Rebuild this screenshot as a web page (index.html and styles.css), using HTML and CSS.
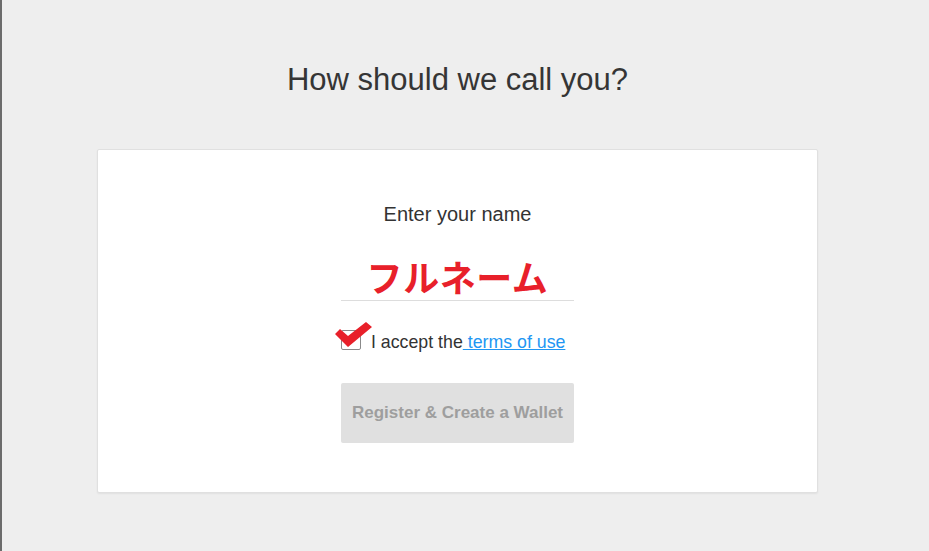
FILE: index.html
```html
<!DOCTYPE html>
<html lang="en">

<head>
    <meta charset="UTF-8">
    <meta name="viewport" content="width=device-width, initial-scale=1.0">
    <title>How should we call you?</title>
    <link rel="stylesheet" href="styles.css">
</head>

<body>
    <div class="page">
        <h1 class="title">How should we call you?</h1>

        <div class="card">
            <div class="label">Enter your name</div>

            <div class="field">
                <input class="name-input" type="text" value="フルネーム">
            </div>

            <div class="terms">
                <span class="check">
                    <span class="box"></span>
                    <!-- hand drawn check mark over the box -->
                    <svg class="tick" width="38" height="28" viewBox="0 0 38 28">
                        <polygon points="0,13 5,8 13,15 31,1 37,6 13,26" fill="#e8202a" />
                    </svg>
                </span>
                <span class="terms-text">I accept the<a href="#"> terms of use</a></span>
            </div>

            <button class="btn" disabled>Register &amp; Create a Wallet</button>
        </div>
    </div>
</body>

</html>
```

FILE: styles.css
```css
* {
    margin: 0;
    padding: 0;
    box-sizing: border-box;
}

html,
body {
    height: 100%;
}

body {
    background: #eeeeee;
    font-family: "Liberation Sans", Arial, sans-serif;
    color: #333333;
    border-left: 2px solid #6b6b6b;
}

.page {
    width: 911px;
    padding-top: 62px;
    display: flex;
    flex-direction: column;
    align-items: center;
}

.title {
    font-size: 31px;
    font-weight: normal;
    line-height: 36px;
    color: #353535;
}

.card {
    margin-top: 51px;
    width: 721px;
    height: 344px;
    background: #ffffff;
    border: 1px solid #e0e0e0;
    border-radius: 2px;
    box-shadow: 0 1px 2px rgba(0, 0, 0, 0.06);
    display: flex;
    flex-direction: column;
    align-items: center;
    padding-top: 52px;
}

.label {
    font-size: 20px;
    line-height: 24px;
    color: #333333;
}

.field {
    margin-top: 25px;
    width: 233px;
    border-bottom: 1px solid #dddddd;
}

.name-input {
    display: block;
    width: 100%;
    height: 49px;
    border: none;
    outline: none;
    background: transparent;
    text-align: center;
    font-family: "Noto Sans CJK JP", sans-serif;
    font-weight: bold;
    font-size: 36px;
    color: #e8202a;
    letter-spacing: 0.6px;
}

.terms {
    margin-top: 24px;
    width: 233px;
    display: flex;
    align-items: center;
    font-size: 17.75px;
    line-height: 22px;
    height: 30px;
}

.check {
    position: relative;
    flex: none;
    margin-left: -6px;
    width: 36px;
    height: 30px;
}

.box {
    position: absolute;
    left: 6px;
    top: 5px;
    width: 20px;
    height: 20px;
    border: 1px solid #8a8a8a;
    border-radius: 2px;
    background: #ffffff;
}

.tick {
    position: absolute;
    left: 0;
    top: -4px;
}

.terms-text {
    flex: none;
    color: #333333;
    margin-top: 4px;
}

.terms-text a {
    color: #2196f3;
    text-decoration: underline;
}

.btn {
    margin-top: 28px;
    width: 233px;
    height: 60px;
    border: none;
    border-radius: 2px;
    background: #e0e0e0;
    color: #9e9e9e;
    font-family: "Liberation Sans", Arial, sans-serif;
    font-size: 17px;
    font-weight: bold;
}
```
